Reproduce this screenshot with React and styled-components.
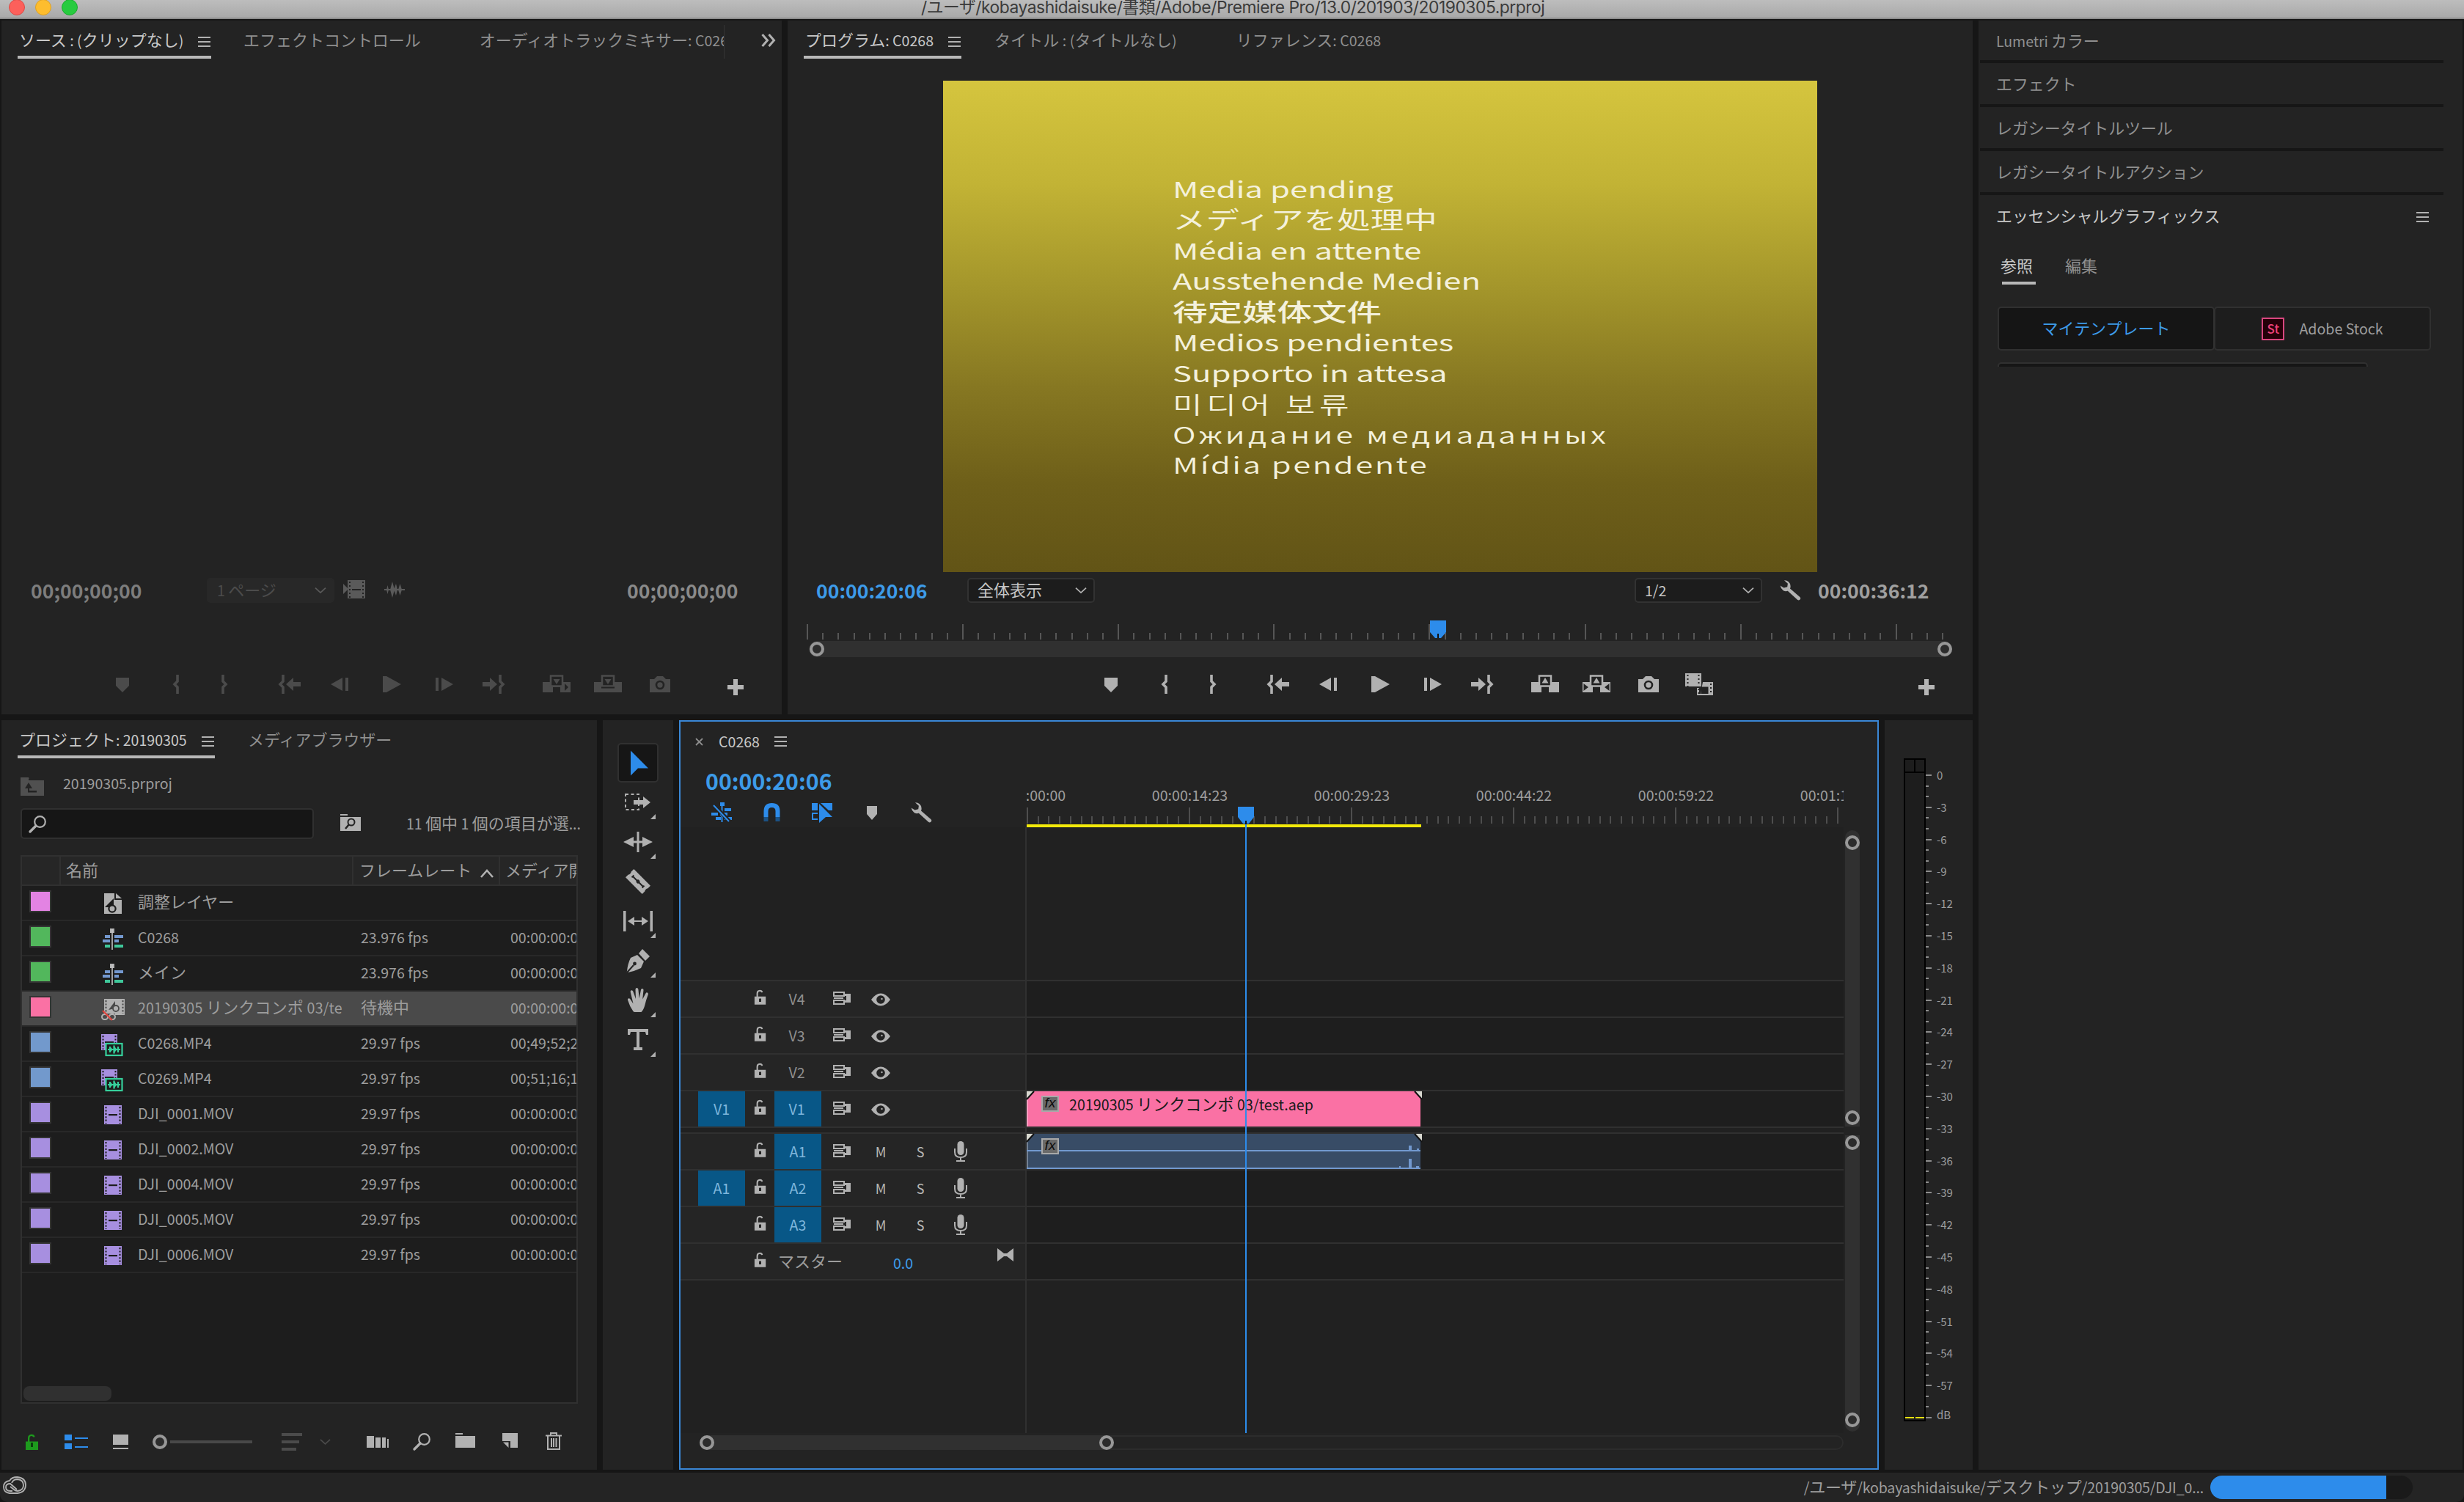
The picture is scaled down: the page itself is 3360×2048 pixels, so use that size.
import React from 'react'
import styled, { createGlobalStyle, css } from 'styled-components'

const GlobalStyle = createGlobalStyle`
  * { box-sizing: border-box; }
  body {
    margin: 0;
    background: #161616;
    font-family: 'Noto Sans CJK JP', 'Open Sans', sans-serif;
    font-size: 19.6px;
    color: #9d9d9d;
    overflow: hidden;
  }
  svg { display: block; flex: none; overflow: visible; }
`

const blue = '#2d8ceb'
const icon = '#b1b1b1'
const dim = '#4b4b4b'

/* ---------- text ---------- */

const Jp = styled.span`
  font-size: 1.122em;
  line-height: 0;
`

// kana and kanji are set a little larger than the latin around them
const T = ({ children }) =>
  children.split(/([\u3000-\u9fff\uff00-\uffef]+)/).map((s, i) => (i % 2 ? <Jp key={i}>{s}</Jp> : s))

const Label = styled.span`
  display: block;
  flex: none;
  white-space: pre;
  overflow: ${p => (p.$clip ? 'hidden' : 'visible')};
  width: ${p => (p.$w ? p.$w + 'px' : 'auto')};
  margin-left: ${p => p.$ml || 0}px;
  margin-top: ${p => p.$mt || 0}px;
  line-height: ${p => p.$lh || 42}px;
  color: ${p => p.$color || 'inherit'};
  letter-spacing: ${p => p.$ls || 0}px;
`

const Timecode = styled.span`
  flex: none;
  display: block;
  width: ${p => p.$w || 153}px;
  font-size: ${p => p.$size || 26.6}px;
  font-weight: 700;
  line-height: ${p => p.$lh || 40}px;
  margin-left: ${p => p.$ml || 0}px;
  margin-right: ${p => p.$mr || 0}px;
  color: ${p => p.$color || '#a0a0a0'};
  white-space: pre;
`

/* ---------- frame ---------- */

const Window = styled.div`
  width: 3360px;
  height: 2048px;
  display: flex;
  flex-direction: column;
  overflow: hidden;
`

const TitleBar = styled.header`
  height: 26px;
  flex: none;
  display: flex;
  align-items: flex-start;
  padding-left: 12px;
  background: linear-gradient(#bdbdbd, #a9a9a9);
  border-bottom: 2px solid #8c8c8c;
  overflow: hidden;
`

const Light = styled.i`
  width: 22px;
  height: 22px;
  border-radius: 50%;
  margin: -1px 14px 0 0;
  background: ${p => p.$color};
  border: 1px solid ${p => p.$edge};
`

const WindowTitle = styled.span`
  margin-left: 1136px;
  font-family: Inter, 'Noto Sans CJK JP', sans-serif;
  font-size: 22.8px;
  letter-spacing: -.46px;
  line-height: 20px;
  color: #3b3b3b;
  white-space: pre;
`

const Workspace = styled.main`
  flex: none;
  height: 1982px;
  padding: 2px 2px 4px;
  display: flex;
  gap: 8px;
`

const Column = styled.div`
  width: 2688px;
  display: flex;
  flex-direction: column;
  gap: 8px;
`

const Row = styled.div`
  display: flex;
  gap: 8px;
  height: ${p => p.$h}px;
`

const Panel = styled.section`
  position: relative;
  flex: none;
  width: ${p => p.$w}px;
  background: #232323;
  display: flex;
  flex-direction: column;
  overflow: hidden;
`

const TabBar = styled.nav`
  display: flex;
  flex: none;
  height: 52px;
  padding: 6px 0 0 22px;
`

const Tab = styled.div`
  display: flex;
  flex: none;
  align-items: flex-start;
  height: 46px;
  width: ${p => (p.$w ? p.$w + 'px' : 'auto')};
  margin-left: ${p => p.$ml || 0}px;
  color: #8f8f8f;
  overflow: ${p => (p.$clip ? 'hidden' : 'visible')};
  border-right: ${p => (p.$clip ? '1px solid #343434' : 0)};
  ${p => p.$active && css`
    color: #c8c8c8;
    padding-left: 2px;
    border-bottom: 4px solid #b8b8b8;
  `}
`

const MenuLines = styled.i`
  flex: none;
  width: 17px;
  height: 14px;
  margin: ${p => p.$m || '16px 1px 0 auto'};
  border-top: 2px solid ${icon};
  border-bottom: 2px solid ${icon};
  background: linear-gradient(${icon}, ${icon}) center / 100% 2px no-repeat;
`

const Spacer = styled.div`
  flex: ${p => (p.$h || p.$w ? 'none' : 1)};
  height: ${p => (p.$h ? p.$h + 'px' : 'auto')};
  width: ${p => (p.$w ? p.$w + 'px' : 'auto')};
`

const Glyph = styled.svg`
  margin-left: ${p => p.$ml || 0}px;
  margin-top: ${p => p.$mt || 0}px;
`

/* ---------- monitors ---------- */

const Controls = styled.div`
  display: flex;
  flex: none;
  height: 38px;
  align-items: center;
`

const Select = styled.div`
  width: 174px;
  height: 34px;
  flex: none;
  display: flex;
  align-items: center;
  justify-content: space-between;
  margin-left: ${p => p.$ml}px;
  padding: 0 9px 0 12px;
  border-radius: 5px;
  color: ${p => (p.$off ? '#4c4c4c' : '#c6c6c6')};
  background: ${p => (p.$off ? '#282828' : '#1c1c1c')};
  border: 2px solid ${p => (p.$off ? '#282828' : '#323232')};
`

const Chevron = ({ color = icon, w = 16, h = 8 }) => (
  <svg width={w} height={h} viewBox="0 0 16 8">
    <path d="M1 .7l7 6.4 7-6.4" fill="none" stroke={color} strokeWidth="1.8" />
  </svg>
)

const Wrench = ({ ml = 0 }) => (
  <Glyph $ml={ml} width="29" height="28" viewBox="0 0 29 28">
    <path fill={icon} d="M6 .2a8 8 0 0 1 8.6 7.800q.2 2-.6 3.600L27.600 23.300q1.400 1.500.2 3-1.400 1.800-3.500.7L10.800 14.800q-3 1-6-.6Q1.400 12 .6 7.600l5 3 4.600-1.300.7-4.500z" />
  </Glyph>
)

const Transport = styled.div`
  display: flex;
  flex: none;
  height: 40px;
  padding-left: ${p => p.$pl}px;
  color: ${p => p.$color};
`

const Slot = styled.svg.attrs({ width: 40, height: 40, viewBox: '0 0 40 40', fill: 'currentColor' })`
  margin-left: ${p => p.$ml || 0}px;
  margin-top: ${p => p.$mt || 0}px;
`

const braceL = x => <path d={`M${x} 7v9l-4 4 4 4v9`} fill="none" stroke="currentColor" strokeWidth="3.6" />
const braceR = x => <path d={`M${x} 7v9l4 4-4 4v9`} fill="none" stroke="currentColor" strokeWidth="3.6" />
const topBox = <rect x="12" y="8.500" width="16" height="14" fill="#232323" stroke="currentColor" strokeWidth="2.500" />

const Insert = () => (
  <>
    <path d="M1 17h38v14H25v-8H15v8H1z" />
    {topBox}
    <path d="M15.500 13h9L20 20zM15 22h10v2H15z" />
    <path d="M31 19l5 5-5 5z" fill="#232323" />
  </>
)
const Overwrite = () => (
  <>
    <path d="M1 17h38v14H1z" />
    {topBox}
    <path d="M15.500 13h9L20 20z" />
    <path d="M11 23.500h18v2H11z" fill="#232323" />
  </>
)
const Lift = () => (
  <>
    <path d="M1 17h38v14H25v-8H15v8H1z" />
    {topBox}
    <path d="M15.500 18.500h9L20 11z" />
  </>
)
const Extract = () => (
  <>
    <Lift />
    <path d="M1 18l8 6-8 6zM39 18l-8 6 8 6z" fill="#232323" />
    <path d="M1 17h1.500v14H1zM37.500 17H39v14h-1.500z" />
  </>
)
const Camera = () => (
  <>
    <path d="M6 13h6l4-4h8l4 4h6v18H6z" />
    <circle cx="20" cy="21" r="5" fill="none" stroke="#232323" strokeWidth="2.600" />
  </>
)
const Compare = () => (
  <>
    <path d="M1 5h22v18H1z" />
    <path d="M4.500 7v16M19.500 7v14" stroke="#232323" strokeWidth="2" strokeDasharray="2 3" />
    <path d="M25 17h14v18H17V25h3v8h2" />
    <path d="M22.500 23.500h10V33h-10z" fill="#232323" />
    <path d="M19.500 26v8M36 19v15" stroke="#232323" strokeWidth="2" strokeDasharray="2 3" />
  </>
)
const Plus = () => <path d="M17 9h6v8h8v6h-8v8h-6v-8H9v-6h8z" />

const TransportIcons = ({ color, pl, program, plus }) => (
  <Transport $pl={pl} $color={color}>
    <Slot><path d="M11 11h18v11l-9 9-9-9z" /></Slot>
    <Slot $ml={33}>{braceL(22)}</Slot>
    <Slot $ml={27}>{braceR(17)}</Slot>
    <Slot $ml={48}>{braceL(11)}<path d="M15 20l10-9v6h10v6H25v6z" /></Slot>
    <Slot $ml={28}><path d="M8 20l16-9v18zM28 11h4v18h-4z" /></Slot>
    <Slot $ml={31}><path d="M8 9h5l20 11-20 11H8z" /></Slot>
    <Slot $ml={32}><path d="M32 20l-16-9v18zM8 11h4v18H8z" /></Slot>
    <Slot $ml={27}>{braceR(29)}<path d="M25 20l-10-9v6H5v6h10v6z" /></Slot>
    <Slot $ml={46}>{program ? <Lift /> : <Insert />}</Slot>
    <Slot $ml={30}>{program ? <Extract /> : <Overwrite />}</Slot>
    <Slot $ml={31}><Camera /></Slot>
    {program && <Slot $ml={29}><Compare /></Slot>}
    <Slot $ml={plus} $mt={4} color="#b5b5b5"><Plus /></Slot>
  </Transport>
)

const Video = styled.div`
  width: 1192px;
  height: 670px;
  flex: none;
  margin: 30px 0 0 212px;
  padding: 127px 0 0 313px;
  background: linear-gradient(#d5c53e 0%, #c2b335 21%, #a4962b 42%, #877822 62%, #6e5f19 82%, #625416 100%);
`

const SlateLine = styled.div`
  height: 41.8px;
  line-height: ${p => p.$lh || 41.8}px;
  white-space: pre;
  color: #f4f1dc;
  transform-origin: left center;
  transform: scaleX(${p => p.$sx || 1.43});
  font-family: ${p => p.$font || "'Noto Sans CJK JP'"}, sans-serif;
  font-size: ${p => p.$size || 30.5}px;
  font-weight: ${p => p.$weight || 400};
  letter-spacing: ${p => p.$ls || 0}px;
`

const slate = [
  { text: 'Media pending' },
  { text: 'メディアを処理中', size: 32.5, sx: 1.4, lh: 37 },
  { text: 'Média en attente' },
  { text: 'Ausstehende Medien' },
  { text: '待定媒体文件', size: 33, weight: 500, sx: 1.44, lh: 40, font: "'Noto Sans CJK SC'" },
  { text: 'Medios pendientes' },
  { text: 'Supporto in attesa' },
  { text: '미디어 보류', size: 32, weight: 350, sx: 1.38, ls: 4, lh: 40, font: "'Noto Sans CJK KR'" },
  { text: 'Ожидание медиаданных', size: 31, weight: 350, sx: 1.38, ls: 3.1 },
  { text: 'Mídia pendente', weight: 350, ls: 1.8 },
]

const ScrollTrack = styled.div`
  position: relative;
  flex: none;
  background: #303030;
  border-radius: 11px;
  width: ${p => p.$w}px;
  height: ${p => p.$h}px;
  margin-left: ${p => p.$ml || 0}px;
`

const Ring = styled.i`
  position: ${p => (p.$flow ? 'static' : 'absolute')};
  flex: none;
  width: 20px;
  height: 20px;
  border-radius: 50%;
  border: 4px solid #979797;
  background: #2c2c2c;
  left: ${p => p.$x ?? 0}px;
  top: ${p => p.$y ?? 0}px;
`

const ticks = (count, step, every) =>
  Array.from({ length: count }, (_, i) => ({ x: Math.round(i * step), major: i % every === 0 }))

const MonitorRuler = styled.div`
  position: relative;
  flex: none;
  height: 28px;
  margin: 22px 0 0 26px;
`

const Playhead = styled.svg`
  position: absolute;
  left: ${p => p.$x}px;
  top: ${p => p.$y}px;
`

const SourceMonitor = () => (
  <Panel $w={1064}>
    <TabBar>
      <Tab $active $w={264}><Label><T>ソース : (クリップなし)</T></Label><MenuLines /></Tab>
      <Tab $ml={44}><Label><T>エフェクトコントロール</T></Label></Tab>
      <Tab $ml={80} $w={334} $clip><Label><T>オーディオトラックミキサー: C0268</T></Label></Tab>
      <Spacer $w={50} />
      <Glyph $mt={12} width="20" height="18" viewBox="0 0 20 18">
        <path d="M1.500 1l7 8-7 8M10.500 1l7 8-7 8" fill="none" stroke={icon} strokeWidth="3" />
      </Glyph>
    </TabBar>
    <Spacer $h={706} />
    <Controls>
      <Timecode $ml={40} $color="#7d7d7d">00;00;00;00</Timecode>
      <Select $off $ml={87}><Label><T>1 ページ</T></Label><Chevron color="#5a5a5a" /></Select>
      <Glyph $ml={11} $mt={-4} width="32" height="27" viewBox="0 0 32 27" fill="#5a5a5a">
        <path d="M1 6l7 7-7 7zM7 1h24v25H7z" />
        <path d="M10 3v22M28 3v22" stroke="#232323" strokeWidth="2" strokeDasharray="2 3" />
        <path d="M13 13h12v2H13z" fill="#232323" />
      </Glyph>
      <Glyph $ml={25} $mt={-2} width="28" height="22" viewBox="0 0 28 22">
        <path d="M0 10h28v2H0zM3 11l1.500-6L6 11l-1.500 6zM8 11l3-11 3 11-3 11zM13 11l3-8 2 8-2 8zM19 11l2.500-8 2.500 8-2.500 8z" fill="#5a5a5a" />
      </Glyph>
      <Spacer />
      <Timecode $color="#8a8a8a" $mr={58}>00;00;00;00</Timecode>
    </Controls>
    <Spacer $h={89} />
    <TransportIcons color={dim} pl={145} plus={63} />
  </Panel>
)

const ProgramMonitor = () => (
  <Panel $w={1616}>
    <TabBar>
      <Tab $active $w={215}><Label><T>プログラム: C0268</T></Label><MenuLines /></Tab>
      <Tab $ml={45}><Label $ls={0.1}><T>タイトル : (タイトルなし)</T></Label></Tab>
      <Tab $ml={81}><Label><T>リファレンス: C0268</T></Label></Tab>
    </TabBar>
    <Video>
      {slate.map(l => (
        <SlateLine key={l.text} $size={l.size} $weight={l.weight} $sx={l.sx} $font={l.font} $ls={l.ls} $lh={l.lh}>{l.text}</SlateLine>
      ))}
    </Video>
    <Spacer $h={6} />
    <Controls>
      <Timecode $ml={39} $color="#3d9be9">00:00:20:06</Timecode>
      <Select $ml={53}><Label><T>全体表示</T></Label><Chevron /></Select>
      <Spacer />
      <Select><Label>1/2</Label><Chevron /></Select>
      <Wrench ml={24} />
      <Spacer $w={23} />
      <Timecode $mr={58}>00:00:36:12</Timecode>
    </Controls>
    <MonitorRuler>
      <svg width="1560" height="26">
        {ticks(74, 21.21, 10).map(t => (
          <path key={t.x} d={`M${t.x + 1} ${t.major ? 5 : 17}V26`} stroke="#565656" strokeWidth="2" />
        ))}
      </svg>
      <Playhead $x={850} $y={0} width="22" height="24">
        <path d="M0 0h22v16l-7 8H7l-7-8z" fill={blue} />
        <path d="M11 18v6" stroke="#111" strokeWidth="2" />
      </Playhead>
    </MonitorRuler>
    <ScrollTrack $w={1559} $h={22} $ml={29}>
      <Ring $x={1} $y={1} />
      <Ring $x={1539} $y={1} />
    </ScrollTrack>
    <Spacer $h={17} />
    <TransportIcons color={icon} pl={421} program plus={270} />
  </Panel>
)

/* ---------- project ---------- */

const PathRow = styled.div`
  display: flex;
  height: 42px;
  margin-top: 13px;
  padding-left: 26px;
  align-items: center;
`

const SearchRow = styled.div`
  display: flex;
  height: 42px;
  margin-top: 13px;
  padding-left: 26px;
  align-items: center;
`

const SearchField = styled.div`
  width: 400px;
  height: 42px;
  padding: 8px 9px;
  background: #161616;
  border: 2px solid #303030;
  border-radius: 5px;
`

const Magnifier = () => (
  <svg width="24" height="24" fill="none" stroke={icon}>
    <circle cx="15.500" cy="8.500" r="7.300" strokeWidth="2.200" />
    <path d="M10 14l-8 8" strokeWidth="3.400" strokeLinecap="round" />
  </svg>
)

const Table = styled.div`
  width: 760px;
  height: 748px;
  margin: 22px 0 0 26px;
  background: #1d1d1d;
  border: 2px solid #303030;
  display: flex;
  flex-direction: column;
  overflow: hidden;
`

const HeadRow = styled.div`
  display: flex;
  flex: none;
  height: 40px;
  background: #262626;
  border-bottom: 2px solid #303030;
`

const HeadCell = styled.div`
  display: flex;
  flex: none;
  width: ${p => p.$w}px;
  padding-left: ${p => p.$pl || 0}px;
  border-right: 2px solid #303030;
  overflow: hidden;
`

const ItemRow = styled.div`
  display: flex;
  flex: none;
  height: 48px;
  padding-left: 10px;
  border-bottom: 2px solid #282828;
  background: ${p => (p.$selected ? '#4a4a4a' : 'transparent')};
`

const Swatch = styled.i`
  width: 30px;
  height: 30px;
  margin-top: 6px;
  flex: none;
  background: ${p => p.$color};
  border: 2px solid #343434;
`

const ItemIcon = styled.svg.attrs({ width: 32, height: 32, viewBox: '0 0 32 32' })`
  margin: 8px 18px 0 68px;
`

const Thumb = styled.i`
  width: 120px;
  height: 20px;
  margin: auto 0 2px 2px;
  border-radius: 8px;
  background: #303030;
`

const film = '#a78fe0'
const holes = (x, y1, y2, c) => <path d={`M${x} ${y1}V${y2}`} stroke={c} strokeWidth="2" strokeDasharray="2.200 2.200" />

const icons = {
  adjust: (
    <>
      <path d="M4 2h14v9h10v19H4z" fill={icon} />
      <path d="M20 2l8 7h-8z" fill={icon} />
      <path d="M5 21L17 9v12z" fill="#1d1d1d" />
      <circle cx="15" cy="23" r="4.600" fill={icon} stroke="#1d1d1d" strokeWidth="2.200" />
    </>
  ),
  sequence: (
    <>
      <path d="M12 2h6v6h-6z" fill={icon} />
      <path d="M5 11h7v4H5zM18 11h12v4H18zM2 17h10v4H2zM18 17h6v4h-6z" fill="#7398cf" />
      <path d="M5 24h7v4H5zM18 24h12v4H18z" fill="#3fc79a" />
      <path d="M15 3v28" stroke="#c4c4c4" strokeWidth="1.600" />
    </>
  ),
  linked: (
    <>
      <path d="M4 2h28v22H4z" fill={icon} />
      {holes(6.500, 4, 22, '#4a4a4a')}
      {holes(29.500, 4, 22, '#4a4a4a')}
      <path d="M10 17l9-12v10z" fill="#4a4a4a" />
      <circle cx="20" cy="15" r="4" fill={icon} stroke="#4a4a4a" strokeWidth="1.800" />
      <path d="M3 22h16v3H3z" fill="#4a4a4a" />
      <rect x="1" y="23" width="8" height="7" rx="3.500" fill="none" stroke={icon} strokeWidth="2" />
      <rect x="11" y="23" width="8" height="7" rx="3.500" fill="none" stroke={icon} strokeWidth="2" />
      <path d="M2 18l13 13" stroke="#e0433c" strokeWidth="2.200" />
    </>
  ),
  av: (
    <>
      <path d="M0 2h22v22H0z" fill={film} />
      {holes(2.500, 4, 23, '#1d1d1d')}
      {holes(19.500, 4, 14, '#1d1d1d')}
      <path d="M5 12h12v2H5z" fill="#1d1d1d" />
      <rect x="6.500" y="15" width="22" height="16" fill="#1d1d1d" stroke="#36cf9b" strokeWidth="2.200" />
      <path d="M9 23h17M12 19v8M17.500 17.500v11M23 19v8" stroke="#36cf9b" strokeWidth="2.200" />
      <path d="M12 19l4 4-4 4M17.500 18l4 5-4 5" fill="#36cf9b" />
    </>
  ),
  clip: (
    <>
      <path d="M4 3h24v26H4z" fill={film} />
      {holes(6.500, 5, 28, '#1d1d1d')}
      {holes(25.500, 5, 28, '#1d1d1d')}
      <path d="M10 15h12v2.200H10z" fill="#1d1d1d" />
    </>
  ),
}

const items = [
  { color: '#e383e3', type: 'adjust', name: '調整レイヤー', fps: '', start: '' },
  { color: '#52b75c', type: 'sequence', name: 'C0268', fps: '23.976 fps', start: '00:00:00:00' },
  { color: '#52b75c', type: 'sequence', name: 'メイン', fps: '23.976 fps', start: '00:00:00:00' },
  { color: '#fa71a4', type: 'linked', name: '20190305 リンクコンポ 03/te', fps: '待機中', start: '00:00:00:00', selected: true },
  { color: '#7299cc', type: 'av', name: 'C0268.MP4', fps: '29.97 fps', start: '00;49;52;21' },
  { color: '#7299cc', type: 'av', name: 'C0269.MP4', fps: '29.97 fps', start: '00;51;16;12' },
  { color: film, type: 'clip', name: 'DJI_0001.MOV', fps: '29.97 fps', start: '00:00:00:00' },
  { color: film, type: 'clip', name: 'DJI_0002.MOV', fps: '29.97 fps', start: '00:00:00:00' },
  { color: film, type: 'clip', name: 'DJI_0004.MOV', fps: '29.97 fps', start: '00:00:00:00' },
  { color: film, type: 'clip', name: 'DJI_0005.MOV', fps: '29.97 fps', start: '00:00:00:00' },
  { color: film, type: 'clip', name: 'DJI_0006.MOV', fps: '29.97 fps', start: '00:00:00:00' },
]

const Footer = styled.div`
  display: flex;
  align-items: center;
  height: 40px;
  margin-top: 32px;
  padding-left: 32px;
`

const FooterSvg = styled.svg.attrs(p => ({ width: p.$w, height: 26, viewBox: `0 0 ${p.$w} 26` }))`
  margin-left: ${p => p.$ml || 0}px;
`

const SliderTrack = styled.i`
  width: 112px;
  height: 4px;
  margin-left: 4px;
  background: #484848;
`

const lockPath = 'M1 10.500h3V6q0-5 5-5.200 4 0 4.600 3.400l-2.300.4Q10.800 3 9 3 6.400 3.200 6.300 6v4.500H18V22H1z'

const ProjectPanel = () => (
  <Panel $w={812}>
    <TabBar>
      <Tab $active $w={269}><Label><T>プロジェクト: 20190305</T></Label><MenuLines /></Tab>
      <Tab $ml={45}><Label><T>メディアブラウザー</T></Label></Tab>
    </TabBar>
    <PathRow>
      <Glyph $mt={8} width="32" height="25" viewBox="0 0 32 25" fill="#505050">
        <path d="M0 0h11l1 3h20v22H0zM0 2h12" />
        <path d="M11 2h21v2H11z" fill="#232323" />
        <path d="M6 15l5-8 5 8h-4v3h10v2.500H10V15z" fill="#232323" />
      </Glyph>
      <Label $ml={26}>20190305.prproj</Label>
    </PathRow>
    <SearchRow>
      <SearchField><Magnifier /></SearchField>
      <Glyph $ml={36} $mt={-4} width="28" height="23" viewBox="0 0 28 23" fill={icon}>
        <path d="M0 0h10v2H0zM0 4h28v19H0z" />
        <circle cx="15" cy="11" r="4.500" fill="none" stroke="#232323" strokeWidth="2" />
        <path d="M12 14l-5 6" stroke="#232323" strokeWidth="2.500" />
      </Glyph>
      <Label $ml={62}><T>11 個中 1 個の項目が選</T>...</Label>
    </SearchRow>
    <Table>
      <HeadRow>
        <HeadCell $w={53} />
        <HeadCell $w={399} $pl={7}><Label $lh={37}><T>名前</T></Label></HeadCell>
        <HeadCell $w={200} $pl={8}>
          <Label $lh={37}><T>フレームレート</T></Label>
          <Glyph $ml={12} $mt={17} width="18" height="12">
            <path d="M1 11l8-9 8 9" fill="none" stroke={icon} strokeWidth="2.600" />
          </Glyph>
        </HeadCell>
        <HeadCell $w={106} $pl={7}><Label $lh={37}><T>メディア開始</T></Label></HeadCell>
      </HeadRow>
      {items.map(it => (
        <ItemRow key={it.name} $selected={it.selected}>
          <Swatch $color={it.color} />
          <ItemIcon>{icons[it.type]}</ItemIcon>
          <Label $w={304} $lh={43.5} $ls={it.selected ? 0.18 : 0} $clip><T>{it.name}</T></Label>
          <Label $w={204} $lh={43.5}><T>{it.fps}</T></Label>
          <Label $lh={43.5}>{it.start}</Label>
        </ItemRow>
      ))}
      <Thumb />
    </Table>
    <Footer>
      <FooterSvg $w={18}>
        <path d={lockPath} transform="translate(0 2)" fill="#1d9b1d" />
        <path d="M8 14h3v6H8z" fill="#0c3f0c" />
      </FooterSvg>
      <FooterSvg $w={32} $ml={36}>
        <path d="M0 3h10v8H0zM0 15h10v8H0zM14 7h18v2H14zM14 19h18v2H14z" fill={blue} />
      </FooterSvg>
      <FooterSvg $w={21} $ml={34}><path d="M0 3h21v14H0zM0 21h21v2H0z" fill={icon} /></FooterSvg>
      <Spacer $w={33} />
      <Ring $flow />
      <SliderTrack />
      <FooterSvg $w={28} $ml={40}><path d="M0 1h28v4H0zM0 11h24v4H0zM0 21h20v4H0z" fill={dim} /></FooterSvg>
      <Spacer $w={24} />
      <Chevron color={dim} w={15} />
      <FooterSvg $w={30} $ml={49}><path d="M0 5h10v16H0zM12 7h7v14h-7zM21 7h5v14h-5zM28 9h2v12h-2z" fill={icon} /></FooterSvg>
      <Spacer $w={33} />
      <Magnifier />
      <FooterSvg $w={27} $ml={34}><path d="M0 1h10v2H0zM0 5h27v16H0z" fill={icon} /></FooterSvg>
      <FooterSvg $w={21} $ml={37}><path d="M0 1h21v20H11v-9H0z" fill={icon} /><path d="M1 13.500h7.500V21z" fill={icon} /></FooterSvg>
      <FooterSvg $w={22} $ml={38}>
        <path d="M0 4.500h22M7 4V1h8v3M3 5v18h16V5M8 8v12M11 8v12M14.500 8v12" fill="none" stroke={icon} strokeWidth="2" />
      </FooterSvg>
    </Footer>
  </Panel>
)

/* ---------- tools ---------- */

const ToolList = styled.div`
  display: flex;
  flex-direction: column;
  align-items: center;
  padding-top: 31px;
`

const Tool = styled.div`
  position: relative;
  width: 56px;
  height: 54px;
  display: grid;
  place-items: center;
  border-radius: 5px;
  ${p => p.$active && css`
    background: #161616;
    border: 2px solid #303030;
  `}
`

const Corner = styled.i`
  position: absolute;
  right: 4px;
  bottom: 4px;
  width: 7px;
  height: 7px;
  background: ${icon};
  clip-path: polygon(100% 0, 100% 100%, 0 100%);
`

const tools = [
  { d: <path d="M10 3.500l24 24H20L10 37.500z" fill={blue} /> },
  {
    sub: true,
    d: (
      <>
        <rect x="3" y="9" width="18" height="21" fill="none" stroke={icon} strokeWidth="2" strokeDasharray="4 3.500" />
        <path d="M14 17h13v-5l10 8-10 8v-5H14z" fill={icon} />
      </>
    ),
  },
  { sub: true, d: <path d="M18.500 6h3v12.500H26V13l14 7-14 7v-5.500h-4.500V34h-3V21.500H14V27L0 20l14-7v5.500h4.500z" fill={icon} /> },
  {
    d: (
      <g transform="rotate(45 20 20)">
        <path d="M4 12h32v5q-2 3 0 6v5H4v-5q2-3 0-6z" fill={icon} />
        <path d="M10 18v4M10 20h20M30 18v4" stroke="#232323" strokeWidth="2" />
        <circle cx="20" cy="20" r="2.500" fill="#232323" />
      </g>
    ),
  },
  {
    sub: true,
    d: (
      <>
        <path d="M0 6h3.500v28H0zM36.500 6H40v28h-3.500z" fill={icon} />
        <path d="M6 20l9-6v5h10v-5l9 6-9 6v-5H15v5z" fill={icon} />
      </>
    ),
  },
  {
    sub: true,
    d: (
      <>
        <path d="M26 4l10 10-6 6-9-10z" fill={icon} />
        <path d="M19 12l9 9-4 9q-8 4-18 6-2-.5-1-2 1-10 5-18z" fill={icon} />
        <path d="M5 36l9-10" stroke="#232323" strokeWidth="2" />
        <circle cx="15.500" cy="24" r="2.400" fill="#232323" />
      </>
    ),
  },
  {
    sub: true,
    d: (
      <path
        transform="translate(1.500 0)"
        d="M12 35q-5-7-7.500-15.500-.5-2 1.400-2.300 1.600-.2 2.600 2l3.500 5.300L8.200 8.500Q8 6.500 9.500 6.200q1.800-.2 2.300 1.600L15.500 18 15 5q.2-2 1.900-2t2 2l1.300 12.500L22.500 5.500q.4-1.800 2-1.600 1.700.4 1.500 2.200l-1.300 12.500L29 10.500q.8-1.600 2.300-1.100 1.500.7 1 2.500-3 8-4.300 14-1.600 6.500-5 10.100h-8q-2 .4-3-1z"
        fill={icon}
      />
    ),
  },
  { sub: true, d: <path d="M6 5h28v8h-3l-1-4h-8v21h4v4H14v-4h4V9h-8l-1 4H6z" fill={icon} /> },
]

const ToolsPanel = () => (
  <Panel $w={96}>
    <ToolList>
      {tools.map((t, i) => (
        <Tool key={i} $active={i === 0}>
          <svg width="40" height="40" viewBox="0 0 40 40">{t.d}</svg>
          {t.sub && <Corner />}
        </Tool>
      ))}
    </ToolList>
  </Panel>
)

/* ---------- timeline ---------- */

const TimelinePanel = styled(Panel)`
  border: 2px solid #3a87d6;
`

const SequenceTab = styled.div`
  display: flex;
  align-items: center;
  height: 42px;
  margin-top: 6px;
  padding-left: 20px;
  color: #c8c8c8;
`

const TimelineTop = styled.div`
  display: flex;
  height: 96px;
`

const TimelineTools = styled.div`
  width: 472px;
  flex: none;
  padding: 10px 0 0 34px;
`

const ToolStrip = styled.div`
  display: flex;
  height: 28px;
  margin-top: 8px;
  padding-left: 8px;
  align-items: center;
`

const Ruler = styled.div`
  position: relative;
  width: 1114px;
  overflow: hidden;
  padding-top: 35px;
`

const RulerLabels = styled.div`
  display: flex;
  margin-left: -109px;
  height: 33px;
`

const RulerLabel = styled.span`
  flex: none;
  width: 221px;
  text-align: center;
  line-height: 33px;
`

const WorkBar = styled.i`
  display: block;
  width: 538px;
  height: 4px;
  background: #f2e90a;
`

const TimelineBody = styled.div`
  display: flex;
  height: 826px;
`

const Tracks = styled.div`
  width: 1586px;
  background: #212121;
`

const EmptyTracks = styled.div`
  display: grid;
  grid-template-columns: 472px 1fr;
  height: ${p => p.$h}px;
  border-bottom: ${p => (p.$line ? '2px solid #303030' : 0)};
  & > :first-child {
    border-right: 2px solid #303030;
  }
`

const TrackRow = styled.div`
  display: grid;
  grid-template-columns: 472px 1fr;
  height: 50px;
  border-bottom: 2px solid #303030;
  background: #1e1e1e;
`

const TrackHead = styled.div`
  display: flex;
  align-items: center;
  padding-left: 24px;
  background: #252525;
  border-right: 2px solid #303030;
`

const Target = styled.span`
  width: 64px;
  height: 48px;
  padding-right: ${p => (p.$video ? 3 : 0)}px;
  line-height: 48px;
  flex: none;
  text-align: center;
  color: ${p => (p.$on ? '#7fb6dc' : '#8f8f8f')};
  background: ${p => (p.$on ? '#085787' : 'transparent')};
`

const HeadSvg = styled.svg.attrs(p => ({ width: p.$w, height: p.$h, viewBox: `0 0 ${p.$w} ${p.$h}` }))`
  margin-left: ${p => p.$ml || 0}px;
  margin-top: ${p => p.$mt || 0}px;
`

const Lock = () => (
  <HeadSvg $w={19} $h={22} $ml={12} $mt={-4}>
    <path d={lockPath} transform="scale(.9 .94)" fill={icon} />
    <path d="M7 13q1.500-1.500 3 0v4H7z" fill="#232323" />
  </HeadSvg>
)

const Sync = () => (
  <HeadSvg $w={24} $h={18} $ml={16} $mt={-3}>
    <path d="M1 1h14v5H1zM1 12h14v5H1zM1 9h13" fill="none" stroke={icon} strokeWidth="2" />
    <path d="M15 3h9v12h-9v-3h3V6h-3z" fill={icon} />
  </HeadSvg>
)

const Eye = () => (
  <HeadSvg $w={26} $h={18} $ml={28} $mt={2}>
    <path d="M0 9q6-8.500 13-8.500T26 9q-6 8.500-13 8.500T0 9z" fill={icon} />
    <circle cx="13" cy="9" r="5.800" fill="#232323" />
    <circle cx="14.500" cy="8" r="1.200" fill={icon} />
  </HeadSvg>
)

const Mic = () => (
  <HeadSvg $w={18} $h={28} $ml={36}>
    <rect x="4.500" y="0" width="9" height="19" rx="4.500" fill={icon} />
    <path d="M1 10v5q0 7 8 7t8-7v-5M9 22v5M3 27h12" fill="none" stroke={icon} strokeWidth="2" />
  </HeadSvg>
)

const TrackButton = styled.span`
  width: 20px;
  margin-left: ${p => p.$ml}px;
  text-align: center;
  font-size: 18px;
  line-height: 40px;
  color: #b8b8b8;
`

const Clip = styled.div`
  position: relative;
  width: 537px;
  height: 48px;
  display: flex;
  padding: 6px 0 0 20px;
  color: #1a1a1a;
  background: ${p => p.$color};
  box-shadow: inset 2px 0 rgba(255, 255, 255, .3);
`

const Fx = styled.span`
  position: relative;
  width: 24px;
  height: 22px;
  flex: none;
  border: 2px solid #a9a9a9;
  background: #6a6a6a;
  color: #0c0c0c;
  font-family: 'Liberation Sans', sans-serif;
  font-style: italic;
  font-size: 19px;
  line-height: 16px;
  text-align: center;
`

const ClipOverlay = styled.svg.attrs({ width: 539, height: 48 })`
  position: absolute;
  left: 0;
  top: 0;
`

const Corners = () => (
  <>
    <path d="M0 0h10L0 10zM539 0h-9l9 10z" fill="#d8d8d0" />
    <path d="M10 0L0 11M529 0l10 11" stroke="#111" strokeWidth="2" />
  </>
)

const VideoClip = () => (
  <Clip $color="#fa71a4">
    <ClipOverlay><Corners /></ClipOverlay>
    <Fx>fx</Fx>
    <Label $ml={14} $lh={23} $ls={0.08}><T>20190305 リンクコンポ 03/test.aep</T></Label>
  </Clip>
)

const AudioClip = () => (
  <Clip $color="#384c66">
    <ClipOverlay>
      <path d="M0 22h537v2H0zM0 46h537v2H0zM521 16h4v6h-4zM532 20h3v2h-3zM521 34h4v12h-4zM508 44h2v2h-2zM531 44h4v2h-4z" fill="#7299cf" />
      <Corners />
    </ClipOverlay>
    <Fx>fx</Fx>
  </Clip>
)

const Track = ({ patch, name, on, audio, children }) => (
  <TrackRow>
    <TrackHead>
      <Target $on={!!patch}>{patch}</Target>
      <Lock />
      <Spacer $w={9} />
      <Target $on={on} $video={!audio}>{name}</Target>
      <Sync />
      {audio ? (
        <>
          <TrackButton $ml={31}>M</TrackButton>
          <TrackButton $ml={34}>S</TrackButton>
          <Mic />
        </>
      ) : <Eye />}
    </TrackHead>
    {children || <div />}
  </TrackRow>
)

const VScroll = styled.div`
  position: relative;
  width: 20px;
  margin: 4px 0 0 2px;
`

const HScroll = styled.div`
  position: relative;
  flex: none;
  width: 1560px;
  height: 20px;
  margin: 3px 0 0 26px;
  border: 2px solid #2c2c2c;
  border-radius: 10px;
`

const Bar = styled.i`
  position: absolute;
  left: ${p => p.$x || 0}px;
  top: ${p => p.$y || 0}px;
  width: ${p => p.$w}px;
  height: ${p => p.$h}px;
  background: #303030;
  border-radius: ${p => p.$r || 0};
`

const PlayLine = styled.i`
  position: absolute;
  left: 770px;
  top: 137px;
  width: 2px;
  height: 833px;
  background: ${blue};
`

const rulerLabels = ['00:00:00:00', '00:00:14:23', '00:00:29:23', '00:00:44:22', '00:00:59:22', '00:01:14:22']

const Timeline = () => (
  <TimelinePanel $w={1636}>
    <SequenceTab>
      <svg width="11" height="11"><path d="M1 1l9 9M10 1l-9 9" stroke="#8c8c8c" strokeWidth="1.800" /></svg>
      <Label $ml={21}>C0268</Label>
      <MenuLines $m="0 0 0 20px" />
    </SequenceTab>
    <TimelineTop>
      <TimelineTools>
        <Timecode $w={180} $size={30.3} $color="#3d9be9" $lh={44}>00:00:20:06</Timecode>
        <ToolStrip>
          <svg width="28" height="28" fill={blue}>
            <path d="M12 0h6v5h-6zM18 8h9v4h-9zM0 14h9v4H0zM12 14h10v4H12zM6 20h7v4H6zM18 20h10v4H18zM13.500 5h2v22h-2z" />
            <path d="M3 3l22 23" stroke="#232323" strokeWidth="5" />
            <path d="M3 4l21 22" stroke={blue} strokeWidth="2" />
          </svg>
          <Glyph $ml={43} width="23" height="26" fill="none">
            <path d="M3.500 19v-8q0-8 8-8t8 8v8" stroke={blue} strokeWidth="6" />
            <path d="M3.500 19v6M19.500 19v6" stroke="#1b5285" strokeWidth="6" />
          </Glyph>
          <Glyph $ml={43} width="28" height="28" fill={blue}>
            <path d="M0 1h8v10H0zM12 1h16v10h-5zM0 14h8v2H2v6h6v2H0zM10 2l18 18h-9l-9 8z" />
          </Glyph>
          <Glyph $ml={47} width="14" height="19"><path d="M0 0h14v11l-7 8-7-8z" fill={icon} /></Glyph>
          <Wrench ml={46} />
        </ToolStrip>
      </TimelineTools>
      <Ruler>
        <RulerLabels>
          {rulerLabels.map(l => <RulerLabel key={l}>{l}</RulerLabel>)}
        </RulerLabels>
        <svg width="1114" height="24">
          {ticks(76, 14.73, 15).map(t => (
            <path key={t.x} d={`M${t.x + 1} ${t.major ? 1 : 13}V23`} stroke="#4e4e4e" strokeWidth="2" />
          ))}
        </svg>
        <WorkBar />
      </Ruler>
    </TimelineTop>
    <TimelineBody>
      <Tracks>
        <EmptyTracks $h={210} $line><div /><div /></EmptyTracks>
        <Track name="V4" />
        <Track name="V3" />
        <Track name="V2" />
        <Track name="V1" patch="V1" on><VideoClip /></Track>
        <EmptyTracks $h={8} $line><div /><div /></EmptyTracks>
        <Track name="A1" on audio><AudioClip /></Track>
        <Track name="A2" patch="A1" on audio />
        <Track name="A3" on audio />
        <TrackRow>
          <TrackHead>
            <Spacer $w={64} />
            <Lock />
            <Label $ml={14}><T>マスター</T></Label>
            <Label $ml={69} $mt={4} $color="#3d9be9">0.0</Label>
            <HeadSvg $w={22} $h={18} $ml={115} $mt={-18}>
              <path d="M0 0l9 7h4l9-7v18l-9-7H9l-9 7z" fill={icon} />
            </HeadSvg>
          </TrackHead>
          <div />
        </TrackRow>
        <EmptyTracks $h={208}><div /><div /></EmptyTracks>
      </Tracks>
      <VScroll>
        <Bar $w={20} $h={404} $r="10px 10px 0 0" />
        <Bar $w={20} $y={416} $h={404} $r="0 0 10px 10px" />
        <Ring $y={7} />
        <Ring $y={382} />
        <Ring $y={416} />
        <Ring $y={794} />
      </VScroll>
    </TimelineBody>
    <HScroll>
      <Bar $w={564} $h={20} $y={-2} $x={-2} $r="10px" />
      <Ring $x={-2} $y={-2} />
      <Ring $x={543} $y={-2} />
    </HScroll>
    <PlayLine />
    <Playhead $x={760} $y={116} width="22" height="24">
      <path d="M0 0h22v14l-7 9H7l-7-9z" fill={blue} />
      <path d="M11 19v5" stroke="#111" strokeWidth="2" />
    </Playhead>
  </TimelinePanel>
)

/* ---------- meters ---------- */

const Meter = styled.div`
  display: flex;
  padding: 52px 0 0 26px;
`

const MeterScale = styled.div`
  padding: 13px 0 0 7px;
  font-size: 15px;
`

const MeterLabel = styled.div`
  height: 43.8px;
  line-height: 20px;
  &:last-child { margin-top: -4px; }
`

const Meters = () => (
  <Panel $w={120}>
    <Meter>
      <svg width="38" height="904">
        <rect x="1" y="1" width="28" height="902" fill="#1d1d1d" stroke="#000" strokeWidth="2" />
        <path d="M15 1v18M1 19h28" stroke="#000" strokeWidth="2" />
        <path d="M2 899h12M16 899h12" stroke="#e6e010" strokeWidth="2" />
        {ticks(61, 14.6, 3).map(t => (
          <path key={t.x} d={`M30 ${t.x + 23}h${t.major ? 8 : 4}`} stroke="#8d8d8d" strokeWidth="2" />
        ))}
      </svg>
      <MeterScale>
        {Array.from({ length: 20 }, (_, i) => <MeterLabel key={i}>{i ? -3 * i : 0}</MeterLabel>)}
        <MeterLabel>dB</MeterLabel>
      </MeterScale>
    </Meter>
  </Panel>
)

/* ---------- essential graphics ---------- */

const SideItem = styled.div`
  display: flex;
  flex: none;
  height: ${p => (p.$open ? 60 : 58)}px;
  width: 632px;
  margin-left: 2px;
  padding: 7px 20px 0 22px;
  color: ${p => (p.$open ? '#c8c8c8' : '#8f8f8f')};
  border-bottom: ${p => (p.$open ? 0 : '4px solid #161616')};
  & + & {
    height: 60px;
    padding-top: 8px;
  }
`

const SideTabs = styled.div`
  display: flex;
  gap: 42px;
  height: 48px;
  margin: 16px 0 0 32px;
`

const SideTab = styled.div`
  width: 46px;
  height: 46px;
  color: ${p => (p.$active ? '#c8c8c8' : '#8f8f8f')};
  border-bottom: ${p => (p.$active ? '4px solid #b8b8b8' : 0)};
`

const Segments = styled.div`
  display: flex;
  margin: 28px 0 0 26px;
`

const Segment = styled.div`
  display: flex;
  align-items: center;
  justify-content: center;
  width: 296px;
  height: 60px;
  margin-right: -1px;
  border: 2px solid #303030;
  border-radius: 5px;
  color: ${p => (p.$active ? '#3d9be9' : '#9d9d9d')};
  background: ${p => (p.$active ? '#151515' : '#1d1d1d')};
`

const StockLogo = styled.span`
  width: 31px;
  height: 31px;
  margin-right: 20px;
  border: 2px solid #d9467f;
  background: #260009;
  color: #f0427c;
  font-weight: 500;
  font-size: 17px;
  line-height: 25px;
  text-align: center;
`

const CutField = styled.i`
  width: 505px;
  height: 6px;
  margin: 16px 0 0 26px;
  background: #161616;
  border: 2px solid #303030;
  border-bottom: 0;
  border-radius: 5px 5px 0 0;
`

const SidePanel = () => (
  <Panel $w={660}>
    {['Lumetri カラー', 'エフェクト', 'レガシータイトルツール', 'レガシータイトルアクション'].map(s => (
      <SideItem key={s}><Label $ls={-0.1}><T>{s}</T></Label></SideItem>
    ))}
    <SideItem $open><Label $ls={-0.1}><T>エッセンシャルグラフィックス</T></Label><MenuLines $m="15px 0 0 auto" /></SideItem>
    <SideTabs>
      <SideTab $active><Label $ml={-2}><T>参照</T></Label></SideTab>
      <SideTab><Label $ml={-2}><T>編集</T></Label></SideTab>
    </SideTabs>
    <Segments>
      <Segment $active><Label><T>マイテンプレート</T></Label></Segment>
      <Segment><StockLogo>St</StockLogo><Label>Adobe Stock</Label></Segment>
    </Segments>
    <CutField />
  </Panel>
)

/* ---------- status bar ---------- */

const StatusBar = styled.footer`
  flex: none;
  height: 40px;
  display: flex;
  align-items: center;
  padding: 0 70px 0 4px;
  background: #242424;
  border-radius: 0 0 10px 10px;
`

const Progress = styled.div`
  width: 276px;
  height: 32px;
  margin-left: 9px;
  border-radius: 16px;
  background: #1a1a1a;
  overflow: hidden;
`

const ProgressFill = styled.div`
  width: 240px;
  height: 100%;
  background: ${blue};
`

export default function App() {
  return (
    <Window>
      <GlobalStyle />
      <TitleBar>
        <Light $color="#fc605b" $edge="#dd4a45" />
        <Light $color="#fdbd2e" $edge="#dea123" />
        <Light $color="#27cb3f" $edge="#1bab2e" />
        <WindowTitle>/ユーザ/kobayashidaisuke/書類/Adobe/Premiere Pro/13.0/201903/20190305.prproj</WindowTitle>
      </TitleBar>
      <Workspace>
        <Column>
          <Row $h={946}>
            <SourceMonitor />
            <ProgramMonitor />
          </Row>
          <Row $h={1022}>
            <ProjectPanel />
            <ToolsPanel />
            <Timeline />
            <Meters />
          </Row>
        </Column>
        <SidePanel />
      </Workspace>
      <StatusBar>
        <Glyph $mt={-6} width="32" height="24" viewBox="0 0 32 24" fill="none" stroke={icon}>
          <path d="M9 23Q1 22 1 14.500 1 7 9 6q3-5 10.500-5Q31 2 31 12 30.500 22 20 23z" strokeWidth="1.800" />
          <path d="M19 18l-9-8q-6 0-6 5t6 5h3M12 9q2-5 8-5 8 1 8 8t-8 8q-3 0-5-2l-5-4" strokeWidth="1.800" />
        </Glyph>
        <Spacer />
        <Label $lh={38} $ls={-0.17}><T>/ユーザ/kobayashidaisuke/デスクトップ/20190305/DJI_0</T>...</Label>
        <Progress><ProgressFill /></Progress>
      </StatusBar>
    </Window>
  )
}
